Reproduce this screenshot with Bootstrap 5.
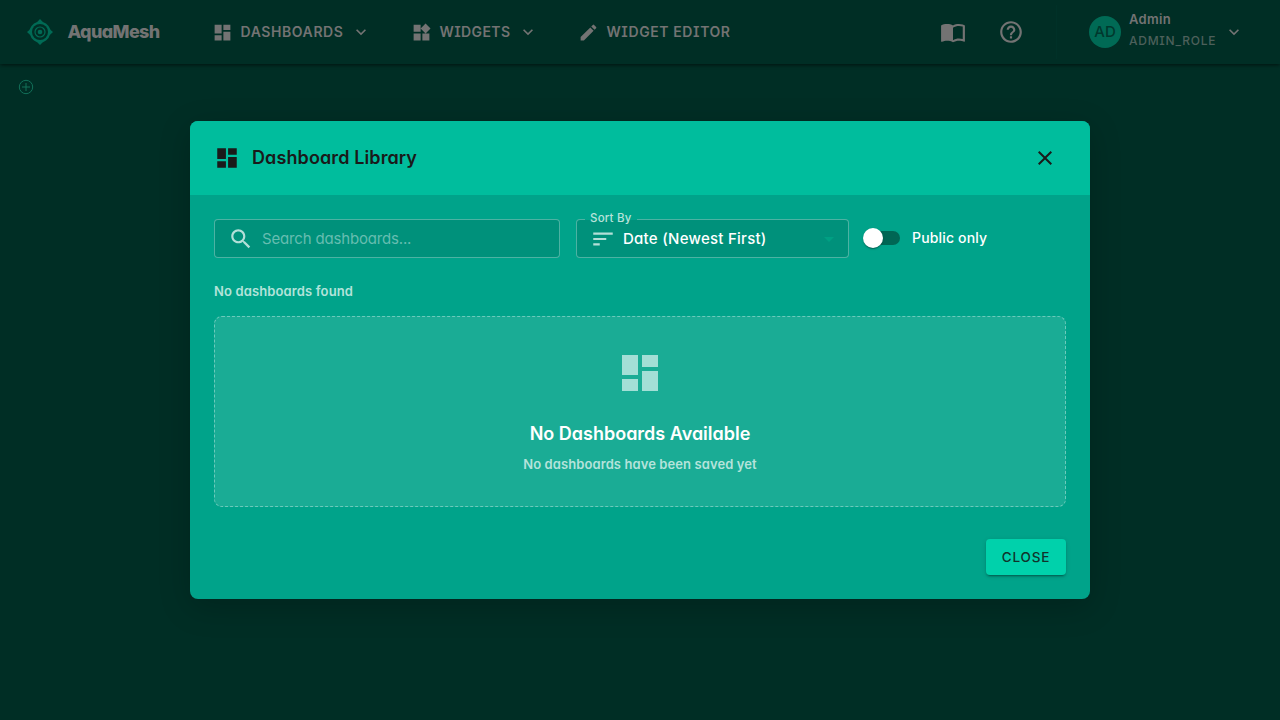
<!DOCTYPE html>
<html lang="en">
<head>
<meta charset="utf-8">
<meta name="viewport" content="width=device-width, initial-scale=1">
<title>AquaMesh</title>
<link href="https://cdn.jsdelivr.net/npm/bootstrap@5.3.0/dist/css/bootstrap.min.css" rel="stylesheet">
<script src="https://cdn.jsdelivr.net/npm/bootstrap@5.3.0/dist/js/bootstrap.bundle.min.js" defer></script>
<style>
body{font-family:Inter,"Liberation Sans",sans-serif;font-feature-settings:"cv08","cv11";background:#002e25;color:#737373;height:720px;overflow:hidden}
svg{display:block;flex:none;fill:currentColor}
.topbar{height:64px;background:#002e25;box-shadow:0 2px 4px -1px rgba(0,0,0,.4),0 1px 3px rgba(0,0,0,.25);padding:0 24px}
.brand-mark{color:#006a55}
.brand-name{width:92px;font-size:18px;font-weight:800;line-height:28px;margin:0 52px 0 11.500px;letter-spacing:-.65px}
.nav-group{font-size:14px;font-weight:600;line-height:24px;letter-spacing:.59px;margin-right:39.500px;gap:8px;font-feature-settings:"ss02","cv08"}
.nav-group svg:last-child{margin-left:-.5px}
.w-dash{width:103px}.w-widgets{width:71px;letter-spacing:.4px}
.divider{width:1px;height:54px;background:#003128;margin:0 32px}
.avatar-dot{width:32px;height:32px;border-radius:50%;background:#006a55;color:#00382d;font-size:15px;font-weight:500}
.user-lines{width:88px;margin:-4px 7px 0 8px;gap:4px}
.user-name{font-size:13px;font-weight:600;line-height:18px;letter-spacing:.3px}
.user-role{font-size:12px;font-weight:500;line-height:18px;color:#4d605b;letter-spacing:.75px;font-feature-settings:"ss02","cv08"}
.add-tab{color:#127059;padding:15px 0 0 18px}
.lib-dialog{width:900px;max-width:900px;margin:121px auto 0}
.lib-content{border:0;border-radius:8px;background:#00a38a;color:#fff;overflow:hidden;height:478px}
.lib-shadow{border-radius:8px;box-shadow:0 8px 32px rgba(0,0,0,.2)}
.lib-head{height:74px;background:#00bd9d;color:#1a1a1a;border:0;border-radius:0;padding:0 33px 0 24px}
.lib-title{font-size:18px;font-weight:600;line-height:28px;margin:0 0 0 12px;letter-spacing:.11px}
.lib-body{padding:24px}
.field{height:39px;border:1px solid rgba(255,255,255,.3);border-radius:4px;background:#00917b}
.search-field{width:346px;padding-left:13px}
.hint{font-size:15px;color:#66bdb0;padding-top:2px;letter-spacing:-.17px}
.sort-field{width:273px;padding-left:13px;margin-left:16px;position:relative}
.sort-label{position:absolute;left:8px;top:-10px;padding:0 5px;font-size:11.500px;line-height:16px;font-weight:500;letter-spacing:.2px;color:#b8e2da;background:linear-gradient(#00a38a 0 10px,#00917b 10px)}
.sort-value{font-size:15px;font-weight:500;margin-left:7px;padding-top:2px;letter-spacing:.26px}
.sort-caret{color:#00a083;margin-right:7px}
.soft{color:#b3dfd8}
.switch-track{width:34px;height:14px;border-radius:7px;background:#006654;position:relative;margin:-1px 0 0 17px}
.switch-thumb{position:absolute;left:-3px;top:-3px;width:20px;height:20px;border-radius:50%;background:#fff;box-shadow:0 2px 1px -1px rgba(0,0,0,.2),0 1px 1px rgba(0,0,0,.14),0 1px 3px rgba(0,0,0,.12)}
.public-text{font-size:14px;font-weight:500;margin:-2px 0 0 12px;letter-spacing:.16px}
.count-text{font-size:13px;font-weight:600;line-height:20px;margin:23px 0 15px;color:#b3e3da;letter-spacing:.13px}
.empty-box{height:191px;border:1px dashed rgba(255,255,255,.36);border-radius:8px;background:#1aac95;padding-top:32px}
.empty-icon{color:#a3dfd6}
.empty-title{font-size:18px;font-weight:600;line-height:28px;margin:23px 0 0}
.empty-sub{font-size:13px;font-weight:600;line-height:20px;margin-top:6px;color:#b5e3db;letter-spacing:.09px}
.close-btn{width:80px;height:36px;margin-top:32px;background:#00d1ab;color:#10332b;border:0;border-radius:4px;font-size:13.500px;font-weight:500;letter-spacing:.8px;box-shadow:0 3px 1px -2px rgba(0,0,0,.2),0 2px 2px rgba(0,0,0,.14),0 1px 5px rgba(0,0,0,.12)}
</style>
</head>
<body>
<svg class="d-none"><defs>
<symbol id="dash" viewBox="0 0 24 24"><path d="M3 13h8V3H3zm0 8h8v-6H3zm10 0h8V11h-8zm0-18v6h8V3z"/></symbol>
<symbol id="chev" viewBox="0 0 24 24"><path d="M7.41 8.59 12 13.17l4.59-4.58L18 10l-6 6-6-6z"/></symbol>
</defs></svg>
<nav class="topbar d-flex align-items-center text-nowrap">
  <svg class="brand-mark" width="32" height="32" viewBox="0 0 32 32"><path d="M16 3Q18 6 22 7.500L24.500 10Q26 14 29 16Q26 18 24.500 22L22 24.500Q18 26 16 29Q14 26 10 24.500L7.500 22Q6 18 3 16Q6 14 7.500 10L10 7.500Q14 6 16 3Z"/><circle cx="16" cy="16" r="8" fill="#002e25"/><circle cx="16" cy="16" r="5" fill="none" stroke="currentColor" stroke-width="1.200"/><circle cx="16" cy="16" r="2.300"/></svg>
  <span class="brand-name">AquaMesh</span>
  <div class="nav-group d-flex align-items-center"><svg width="21" height="21"><use href="#dash"/></svg><span class="w-dash">DASHBOARDS</span><svg width="20" height="20"><use href="#chev"/></svg></div>
  <div class="nav-group d-flex align-items-center"><svg width="21" height="21" viewBox="0 0 24 24"><path d="M13 13v8h8v-8zM3 21h8v-8H3zM3 3v8h8V3zm13.660-1.310L11 7.340 16.660 13l5.660-5.660z"/></svg><span class="w-widgets">WIDGETS</span><svg width="20" height="20"><use href="#chev"/></svg></div>
  <div class="nav-group d-flex align-items-center"><svg width="21" height="21" viewBox="0 0 24 24"><path d="M3 17.250V21h3.750L17.810 9.940l-3.750-3.750zM20.710 7.040c.39-.39.39-1.020 0-1.410l-2.340-2.340a1 1 0 0 0-1.410 0l-1.830 1.830 3.750 3.750z"/></svg><span>WIDGET EDITOR</span></div>
  <div class="d-flex align-items-center ms-auto me-2 pe-1">
    <svg width="26" height="26" viewBox="0 0 24 24"><path d="M21 5c-1.110-.35-2.330-.5-3.500-.5-1.950 0-4.050.4-5.500 1.500-1.450-1.100-3.550-1.500-5.500-1.500S2.450 4.900 1 6v14.650c0 .25.25.5.5.5.1 0 .15-.05.25-.05C3.100 20.450 5.050 20 6.500 20c1.950 0 4.050.4 5.500 1.500 1.350-.85 3.800-1.500 5.500-1.500 1.650 0 3.350.3 4.750 1.050.1.05.15.05.25.05.25 0 .5-.25.5-.5V6c-.6-.45-1.250-.75-2-1m0 13.500c-1.100-.35-2.300-.5-3.500-.5-1.700 0-4.150.65-5.500 1.500V8c1.350-.85 3.800-1.500 5.500-1.500 1.200 0 2.400.15 3.500.5z"/></svg>
    <svg class="ms-4" width="42" height="26" viewBox="-7.385 0 38.770 24"><path d="M11 18h2v-2h-2zm1-16C6.480 2 2 6.480 2 12s4.480 10 10 10 10-4.480 10-10S17.520 2 12 2m0 18c-4.410 0-8-3.590-8-8s3.590-8 8-8 8 3.590 8 8-3.590 8-8 8m0-14c-2.210 0-4 1.790-4 4h2c0-1.100.9-2 2-2s2 .9 2 2c0 2-3 1.750-3 5h2c0-2.250 3-2.500 3-5 0-2.210-1.790-4-4-4"/></svg>
    <div class="divider ms-4"></div>
    <div class="avatar-dot d-flex align-items-center justify-content-center">AD</div>
    <div class="user-lines d-flex flex-column"><span class="user-name">Admin</span><span class="user-role">ADMIN_ROLE</span></div>
    <svg width="20" height="20"><use href="#chev"/></svg>
  </div>
</nav>
<div class="add-tab"><svg width="16" height="16" viewBox="0 0 16 16" stroke="currentColor"><circle cx="8" cy="8" r="6.700" fill="none"/><path d="M8 4v8M4 8h8"/></svg></div>

<div class="modal d-block overflow-hidden" role="dialog" aria-modal="true">
 <div class="modal-dialog lib-dialog"><div class="lib-shadow w-100"><div class="modal-content lib-content">
  <div class="modal-header lib-head d-flex align-items-center justify-content-start">
    <svg width="26" height="26"><use href="#dash"/></svg><h5 class="lib-title">Dashboard Library</h5>
    <svg class="ms-auto" width="24" height="24" viewBox="0 0 24 24"><path d="M19 6.410 17.590 5 12 10.590 6.410 5 5 6.410 10.590 12 5 17.590 6.410 19 12 13.410 17.590 19 19 17.590 13.410 12z"/></svg>
  </div>
  <div class="lib-body">
    <div class="d-flex align-items-center">
      <div class="field search-field d-flex align-items-center"><svg class="soft" width="26" height="26" viewBox="0 0 24 24"><path d="M15.500 14h-.79l-.28-.27C15.410 12.590 16 11.110 16 9.500 16 5.910 13.090 3 9.500 3S3 5.910 3 9.500 5.910 16 9.500 16c1.610 0 3.090-.59 4.230-1.570l.27.28v.79l5 4.990L20.490 19zm-6 0C7.010 14 5 11.990 5 9.500S7.010 5 9.500 5 14 7.010 14 9.500 11.990 14 9.500 14"/></svg><span class="hint ms-2">Search dashboards...</span></div>
      <div class="field sort-field d-flex align-items-center"><span class="sort-label">Sort By</span><svg class="soft" width="26" height="26" viewBox="0 0 24 24"><path d="M3 18h6v-2H3zM3 6v2h18V6zm0 7h12v-2H3z"/></svg><span class="sort-value">Date (Newest First)</span><svg class="sort-caret ms-auto" width="24" height="24" viewBox="0 0 24 24"><path d="m7 10 5 5 5-5z"/></svg></div>
      <div class="switch-track"><span class="switch-thumb"></span></div><span class="public-text">Public only</span>
    </div>
    <div class="count-text">No dashboards found</div>
    <div class="empty-box d-flex flex-column align-items-center"><svg class="empty-icon" width="48" height="48"><use href="#dash"/></svg><h6 class="empty-title">No Dashboards Available</h6><div class="empty-sub">No dashboards have been saved yet</div></div>
    <div class="d-flex justify-content-end"><button class="btn close-btn p-0">CLOSE</button></div>
  </div>
 </div></div></div>
</div>
</body>
</html>
